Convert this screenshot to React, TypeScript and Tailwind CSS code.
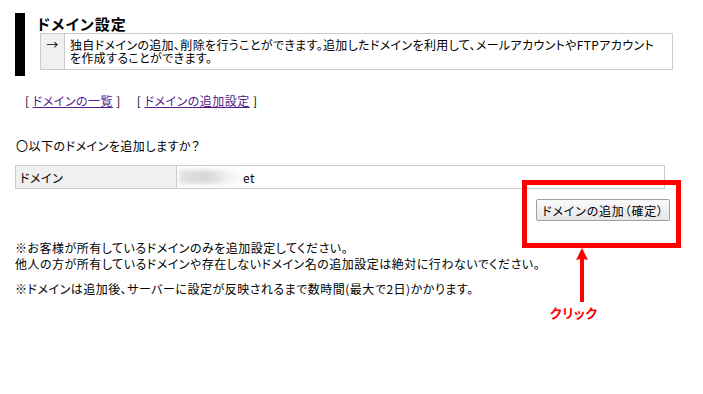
export default function App() {
  return (
    <div className="relative h-[394px] w-[703px] overflow-hidden bg-white px-[15px] pt-[13px] font-['Noto_Sans_CJK_JP',sans-serif] text-[12px] leading-[13px] tracking-[0.5px] text-[#000] [font-feature-settings:'palt']">
      {/* page heading */}
      <div className="h-[63px] border-l-[10px] border-black pl-[15px]">
        <h1 className="-ml-[3px] h-[20px] pt-[1px] text-[15px] font-bold leading-[20px] tracking-[1px]">ドメイン設定</h1>
        <div className="flex h-[37px] w-[633px] border border-[#cccccc]">
          <div className="w-[24px] shrink-0 border-r border-[#cccccc] bg-[#f0f0f0] pt-[4px] text-center">→</div>
          <p className="whitespace-nowrap pl-[5px] pt-[4px] tracking-[0.35px]">
            独自ドメインの追加、削除を行うことができます。追加したドメインを利用して、メールアカウントやFTPアカウント
            <br />
            を作成することができます。
          </p>
        </div>
      </div>

      {/* sub navigation */}
      <div className="mt-[18px] pl-[10px]">
        [ <a href="#" className="text-[#551a8b] underline">ドメインの一覧</a> ]
        <span className="ml-[16px]">[ </span>
        <a href="#" className="text-[#551a8b] underline">ドメインの追加設定</a> ]
      </div>

      <p className="mt-[32px] pl-[1px]">〇以下のドメインを追加しますか？</p>

      {/* confirm table */}
      <div className="mt-[13px] flex h-[24px] w-[650px] border border-[#cccccc]">
        <div className="flex w-[161px] items-center border-r border-[#cccccc] bg-[#f0f0f0] pl-[4px]">ドメイン</div>
        <div className="flex items-center pl-[2px]">
          <span className="h-[14px] w-[62px] bg-[linear-gradient(90deg,#e2e2e2,#d6d6d6_45%,#f3f3f3_80%,#fafafa)] blur-[2px]" />
          <span className="ml-[2px]">et</span>
        </div>
      </div>

      <div className="mt-[10px] flex w-[655px] justify-end">
        <button className="h-[22px] w-[134px] rounded-[2px] border border-[#a0a0a0] bg-[linear-gradient(#fafafa,#e6e6e6)] text-[12px] leading-[13px] tracking-[0.8px]">
          ドメインの追加（確定）
        </button>
      </div>

      {/* notes */}
      <div className="mt-[19px] leading-[16px]">
        <p>※お客様が所有しているドメインのみを追加設定してください。</p>
        <p>他人の方が所有しているドメインや存在しないドメイン名の追加設定は絶対に行わないでください。</p>
        <p className="mt-[9px]">※ドメインは追加後、サーバーに設定が反映されるまで数時間(最大で2日)かかります。</p>
      </div>

      {/* annotation */}
      <div className="absolute left-[522px] top-[180px] h-[68px] w-[159px] border-[5px] border-[#ff0000]" />
      <svg className="absolute left-[575px] top-[247px]" width="14" height="56" viewBox="0 0 14 56">
        <path d="M7 1 L13 13 L9 12 L9 55 L5 55 L5 12 L1 13 Z" fill="#ff0000" />
      </svg>
      <div className="absolute left-[550px] top-[305px] text-[13px] font-bold leading-[16px] tracking-[0.5px] text-[#ff0000]">クリック</div>
    </div>
  );
}
